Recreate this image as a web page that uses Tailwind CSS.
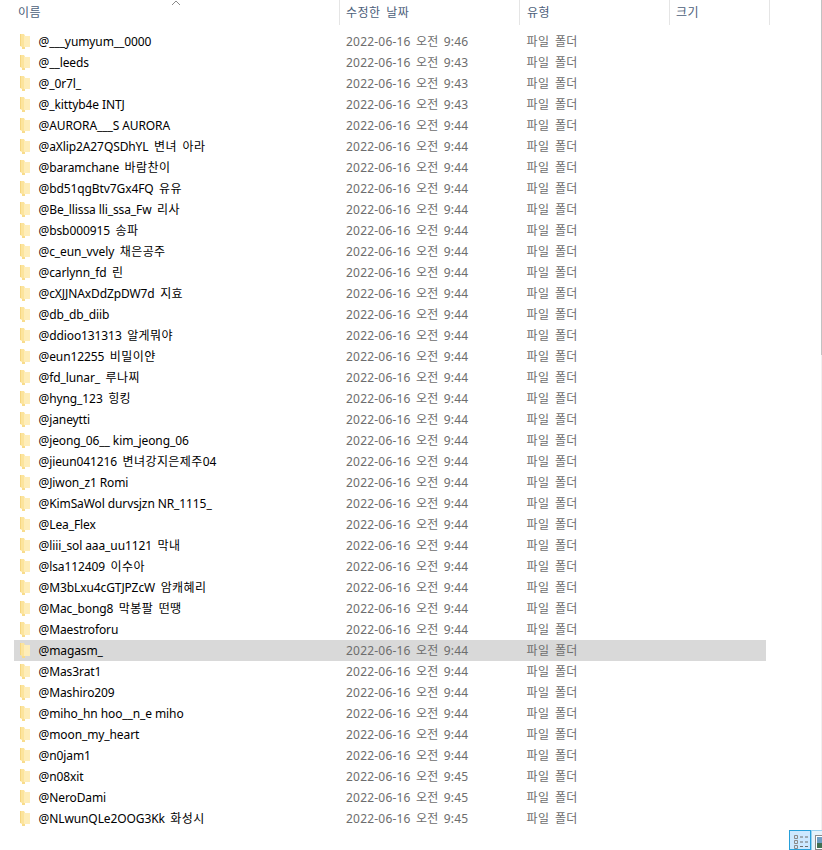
<!DOCTYPE html>
<html lang="ko">
<head>
  <meta charset="UTF-8">
  <title>폴더</title>
  <script src="https://cdn.jsdelivr.net/npm/@tailwindcss/browser@4"></script>
</head>
<body class="bg-white overflow-hidden">
  <div class="relative h-[850px] w-[822px] overflow-hidden font-['Noto_Sans','Noto_Sans_CJK_KR',sans-serif] text-[12px]">
    <!-- sort arrow -->
    <svg class="absolute left-[171px] top-0" width="10" height="6" viewBox="0 0 10 6" fill="none" stroke="#8a8a8a"><path d="M1 5 L5 1 L9 5"/></svg>

    <div class="flex h-[25px] tracking-[0.5px] [word-spacing:2px] text-[#4c607a]">
      <div class="w-[339px] pl-[18px] pt-[4px]">이름</div>
      <div class="w-[180px] border-l border-[#e5e5e5] pl-[6px] pt-[4px]">수정한 날짜</div>
      <div class="w-[150px] border-l border-[#e5e5e5] pl-[7px] pt-[4px]">유형</div>
      <div class="w-[101px] border-x border-[#e5e5e5] pl-[6px] pt-[4px]">크기</div>
    </div>

    <div id="rows" class="pt-[6px]"></div>

    <!-- scrollbar -->
    <div class="absolute right-0 top-0 h-[355px] w-[1px] bg-[#c2c2c2]"></div>
    <div class="absolute right-0 top-[355px] h-[495px] w-[1px] bg-[#f0f0f0]"></div>

    <!-- view buttons -->
    <div class="absolute left-[789px] top-[830px] flex h-[20px] w-[22px] items-start justify-center border border-[#26a0da] bg-[#cce8ff] pl-[1px] pt-[3px]">
      <svg width="16" height="16" viewBox="0 0 16 16" fill="none">
        <path d="M1.5 1.5h3v3h-3zM1.5 6.5h3v3h-3zM1.5 11.5h3v3h-3z" stroke="#8a8a8a"/>
        <path d="M7 3h3M12 3h3M7 8h3M12 8h3M7 12.5h3M12 12.5h3" stroke="#6d6d6d"/>
      </svg>
    </div>
    <div class="absolute left-[811px] top-[830px] flex h-[20px] w-[11px] justify-start overflow-hidden border-l border-t border-[#99d1ef] bg-[#e5f3fb] pl-[3px] pt-[4px]">
      <svg class="shrink-0" width="16" height="16" viewBox="0 0 16 16" fill="none">
        <rect x="0.5" y="0.5" width="15" height="14" fill="#fff" stroke="#8a8a8a"/>
        <rect x="2" y="2" width="12" height="6" fill="#6f9fc4"/>
        <rect x="2" y="8" width="12" height="5" fill="#3f6f52"/>
      </svg>
    </div>
  </div>

  <script>
    const items = [
      ["@___yumyum__0000", "9:46"],
      ["@__leeds", "9:43"],
      ["@_0r7l_", "9:43"],
      ["@_kittyb4e INTJ", "9:43"],
      ["@AURORA___S AURORA", "9:44"],
      ["@aXlip2A27QSDhYL 변녀 아라", "9:44"],
      ["@baramchane 바람찬이", "9:44"],
      ["@bd51qgBtv7Gx4FQ 유유", "9:44"],
      ["@Be_llissa lli_ssa_Fw 리사", "9:44"],
      ["@bsb000915 송파", "9:44"],
      ["@c_eun_vvely 채은공주", "9:44"],
      ["@carlynn_fd 린", "9:44"],
      ["@cXJJNAxDdZpDW7d 지효", "9:44"],
      ["@db_db_diib", "9:44"],
      ["@ddioo131313 알게뭐야", "9:44"],
      ["@eun12255 비밀이얀", "9:44"],
      ["@fd_lunar_ 루나찌", "9:44"],
      ["@hyng_123 힝킹", "9:44"],
      ["@janeytti", "9:44"],
      ["@jeong_06__ kim_jeong_06", "9:44"],
      ["@jieun041216 변녀강지은제주04", "9:44"],
      ["@Jiwon_z1 Romi", "9:44"],
      ["@KimSaWol durvsjzn NR_1115_", "9:44"],
      ["@Lea_Flex", "9:44"],
      ["@liii_sol aaa_uu1121 막내", "9:44"],
      ["@lsa112409 이수아", "9:44"],
      ["@M3bLxu4cGTJPZcW 암캐혜리", "9:44"],
      ["@Mac_bong8 막봉팔 떤땡", "9:44"],
      ["@Maestroforu", "9:44"],
      ["@magasm_", "9:44"],
      ["@Mas3rat1", "9:44"],
      ["@Mashiro209", "9:44"],
      ["@miho_hn hoo__n_e miho", "9:44"],
      ["@moon_my_heart", "9:44"],
      ["@n0jam1", "9:44"],
      ["@n08xit", "9:45"],
      ["@NeroDami", "9:45"],
      ["@NLwunQLe2OOG3Kk 화성시", "9:45"],
    ];
    const folder = `<svg class="shrink-0" width="11" height="15" viewBox="0 0 11 15"><path d="M0 0h4l1 2h5v11H2l-2-1z" fill="#fce49c"/><path d="M4 2h6v11H4z" fill="#feedb9"/><path d="M2 13h3v2H2z" fill="#f8dc8c"/><path d="M0 0h1v12H0z" fill="#f6d680"/></svg>`;
    const hangul = (text) => text.replace(/ ?[가-힣][가-힣 ]*/g, (m) => `<span class="tracking-[0.4px] [word-spacing:2px]">${m}</span>`);
    document.getElementById("rows").innerHTML = items.map(([name, time]) => `
      <div class="ml-[14px] flex h-[21px] w-[752px] items-center ${name === "@magasm_" ? "bg-[#d9d9d9]" : ""}">
        <div class="flex w-[24.5px] justify-start pl-[6px]">${folder}</div>
        <div class="w-[307.5px] whitespace-nowrap tracking-[-0.1px] text-black">${hangul(name)}</div>
        <div class="w-[180.5px] whitespace-nowrap tracking-[0.2px] [word-spacing:2px] text-[#6d6d6d]">2022-06-16 오전 ${time}</div>
        <div class="whitespace-nowrap tracking-[0.4px] [word-spacing:2px] text-[#6d6d6d]">파일 폴더</div>
      </div>`).join("");
  </script>
</body>
</html>
